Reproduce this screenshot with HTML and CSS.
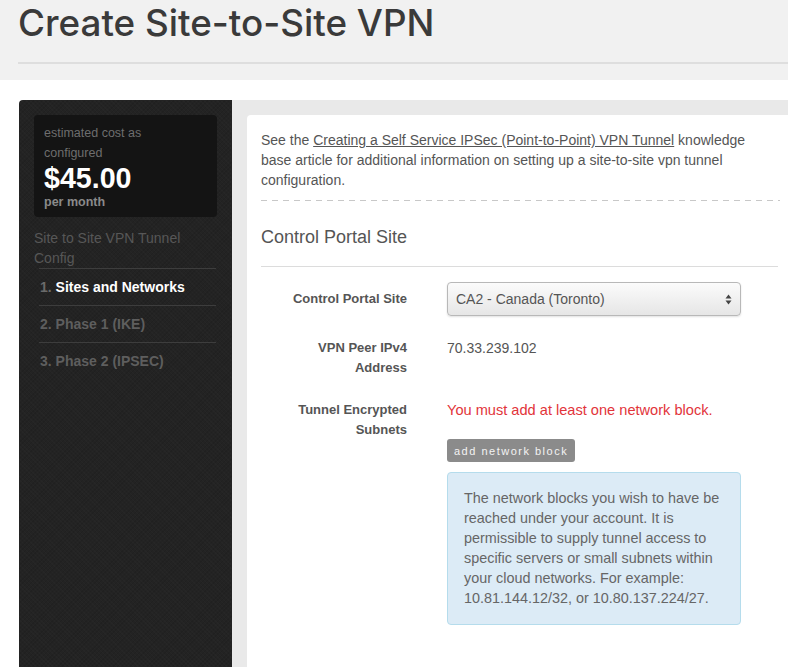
FILE: index.html
```html
<!DOCTYPE html>
<html lang="en">
<head>
<meta charset="utf-8">
<title>Create Site-to-Site VPN</title>
<link rel="stylesheet" href="styles.css">
</head>
<body>
<header class="page-header">
  <h1 class="page-title">Create Site-to-Site VPN</h1>
</header>
<div class="layout">
  <aside class="sidebar">
    <div class="cost-box">
      <div class="cost-label">estimated cost as configured</div>
      <div class="cost-value">$45.00</div>
      <div class="cost-period">per month</div>
    </div>
    <div class="sidebar-title">Site to Site VPN Tunnel Config</div>
    <ol class="steps">
      <li class="step active"><span class="step-num">1.</span> Sites and Networks</li>
      <li class="step">2. Phase 1 (IKE)</li>
      <li class="step">3. Phase 2 (IPSEC)</li>
    </ol>
  </aside>
  <main class="main">
    <section class="panel">
      <p class="intro">See the <a href="#" class="kb-link">Creating a Self Service IPSec (Point-to-Point) VPN Tunnel</a> knowledge base article for additional information on setting up a site-to-site vpn tunnel configuration.</p>
      <div class="dashed"></div>
      <h2 class="section-title">Control Portal Site</h2>
      <div class="form">
        <div class="row">
          <div class="label label-select">Control Portal Site</div>
          <div class="value">
            <div class="select">
              <span>CA2 - Canada (Toronto)</span>
              <svg class="arrows" width="7" height="11" viewBox="0 0 7 11"><path d="M3.5 0.5 L6.5 4.5 L0.5 4.5 Z" fill="#444"/><path d="M3.5 10.5 L6.5 6.5 L0.5 6.5 Z" fill="#444"/></svg>
            </div>
          </div>
        </div>
        <div class="row">
          <div class="label">VPN Peer IPv4<br>Address</div>
          <div class="value text">70.33.239.102</div>
        </div>
        <div class="row">
          <div class="label">Tunnel Encrypted<br>Subnets</div>
          <div class="value">
            <div class="error">You must add at least one network block.</div>
            <button class="btn">add network block</button>
            <div class="info">The network blocks you wish to have be reached under your account. It is permissible to supply tunnel access to specific servers or small subnets within your cloud networks. For example: 10.81.144.12/32, or 10.80.137.224/27.</div>
          </div>
        </div>
      </div>
    </section>
  </main>
</div>
</body>
</html>
```

FILE: styles.css
```css
* { box-sizing: border-box; }
html, body { margin: 0; padding: 0; }
body {
  font-family: "Liberation Sans", Arial, sans-serif;
  background: #fff;
  color: #555;
  height: 667px;
  overflow: hidden;
  display: flex;
  flex-direction: column;
}
.page-header {
  background: #f1f1f1;
  height: 80px;
  padding: 0 0 0 19px;
}
.page-title {
  margin: 0 0 0 -1px;
  font-family: Inter, "Liberation Sans", Arial, sans-serif;
  font-size: 36.8px;
  font-weight: 500;
  color: #3a3a3a;
  line-height: 46px;
  height: 64px;
  border-bottom: 2px solid #dedede;
}
.layout {
  flex: 1;
  display: flex;
  margin-top: 20px;
  padding-left: 19px;
}
.sidebar {
  width: 213px;
  background-color: #232323;
  background-image: repeating-linear-gradient(45deg, rgba(255,255,255,0.015) 0 1px, transparent 1px 3px), repeating-linear-gradient(-45deg, rgba(0,0,0,0.08) 0 1px, transparent 1px 3px);
  border-radius: 4px 0 0 0;
  padding: 15px 15px 0 15px;
}
.cost-box {
  background: #141414;
  border-radius: 4px;
  padding: 8px 10px 10px;
  height: 102px;
}
.cost-label {
  font-size: 12.5px;
  line-height: 20px;
  color: #6e6e6e;
  width: 130px;
}
.cost-value {
  font-size: 28.6px;
  font-weight: bold;
  color: #fff;
  line-height: 31px;
}
.cost-period {
  font-size: 12.5px;
  font-weight: bold;
  color: #8a8a8a;
  line-height: 16px;
}
.sidebar-title {
  margin-top: 11px;
  font-size: 14px;
  line-height: 20px;
  color: #575757;
}
.steps {
  list-style: none;
  margin: 0 1px 0 5px;
  padding: 0;
}
.step {
  border-top: 1px solid #3d3d3d;
  height: 37px;
  line-height: 36px;
  font-size: 14px;
  font-weight: bold;
  color: #5e5e5e;
  padding-left: 1px;
}
.step.active { color: #fff; }
.step-num { color: #6a6a6a; }
.main {
  flex: 1;
  background: #e9e9e9;
  padding: 15px 0 0 15px;
  display: flex;
}
.panel {
  flex: 1;
  background: #fff;
  border-radius: 4px 0 0 0;
  padding: 15px 8px 0 14px;
}
.intro {
  margin: 0;
  max-width: 500px;
  font-size: 14px;
  line-height: 20px;
  color: #555;
}
.kb-link { color: #555; text-decoration: underline; }
.dashed {
  margin-top: 10px;
  height: 1px;
  background-image: repeating-linear-gradient(to right, #c8c8c8 0 6px, transparent 6px 11px);
}
.section-title {
  margin: 23px 2px 0 0;
  font-size: 18px;
  font-weight: normal;
  line-height: 26px;
  color: #555;
  padding-bottom: 16px;
  border-bottom: 1px solid #dcdcdc;
}
.form { padding-top: 15px; }
.row {
  display: flex;
  gap: 40px;
  margin-bottom: 22px;
}
.label {
  width: 146px;
  text-align: right;
  font-size: 13px;
  font-weight: bold;
  line-height: 20px;
  color: #555;
}
.label-select { padding-top: 7px; }
.value { width: 294px; }
.value.text { font-size: 14px; line-height: 20px; color: #555; }
.select {
  height: 34px;
  border: 1px solid #b8b8b8;
  border-radius: 4px;
  background: linear-gradient(#fbfbfb, #e6e6e6);
  box-shadow: 0 1px 2px rgba(0,0,0,0.12);
  display: flex;
  align-items: center;
  justify-content: space-between;
  padding: 0 8px;
  font-size: 14px;
  color: #555;
}
.arrows { display: block; }
.error {
  font-size: 14.6px;
  line-height: 20px;
  color: #e2343a;
}
.btn {
  display: block;
  margin-top: 19px;
  height: 23px;
  padding: 0 7px;
  border: none;
  border-radius: 3px;
  background: #8b8b8b;
  color: #f3f3f3;
  font-family: "Liberation Sans", Arial, sans-serif;
  font-size: 11px;
  letter-spacing: 1.5px;
}
.info {
  margin-top: 10px;
  background: #dcebf6;
  border: 1px solid #b5dcec;
  border-radius: 4px;
  padding: 15px 16px 16px;
  font-size: 14.4px;
  line-height: 20px;
  color: #666;
}
```
